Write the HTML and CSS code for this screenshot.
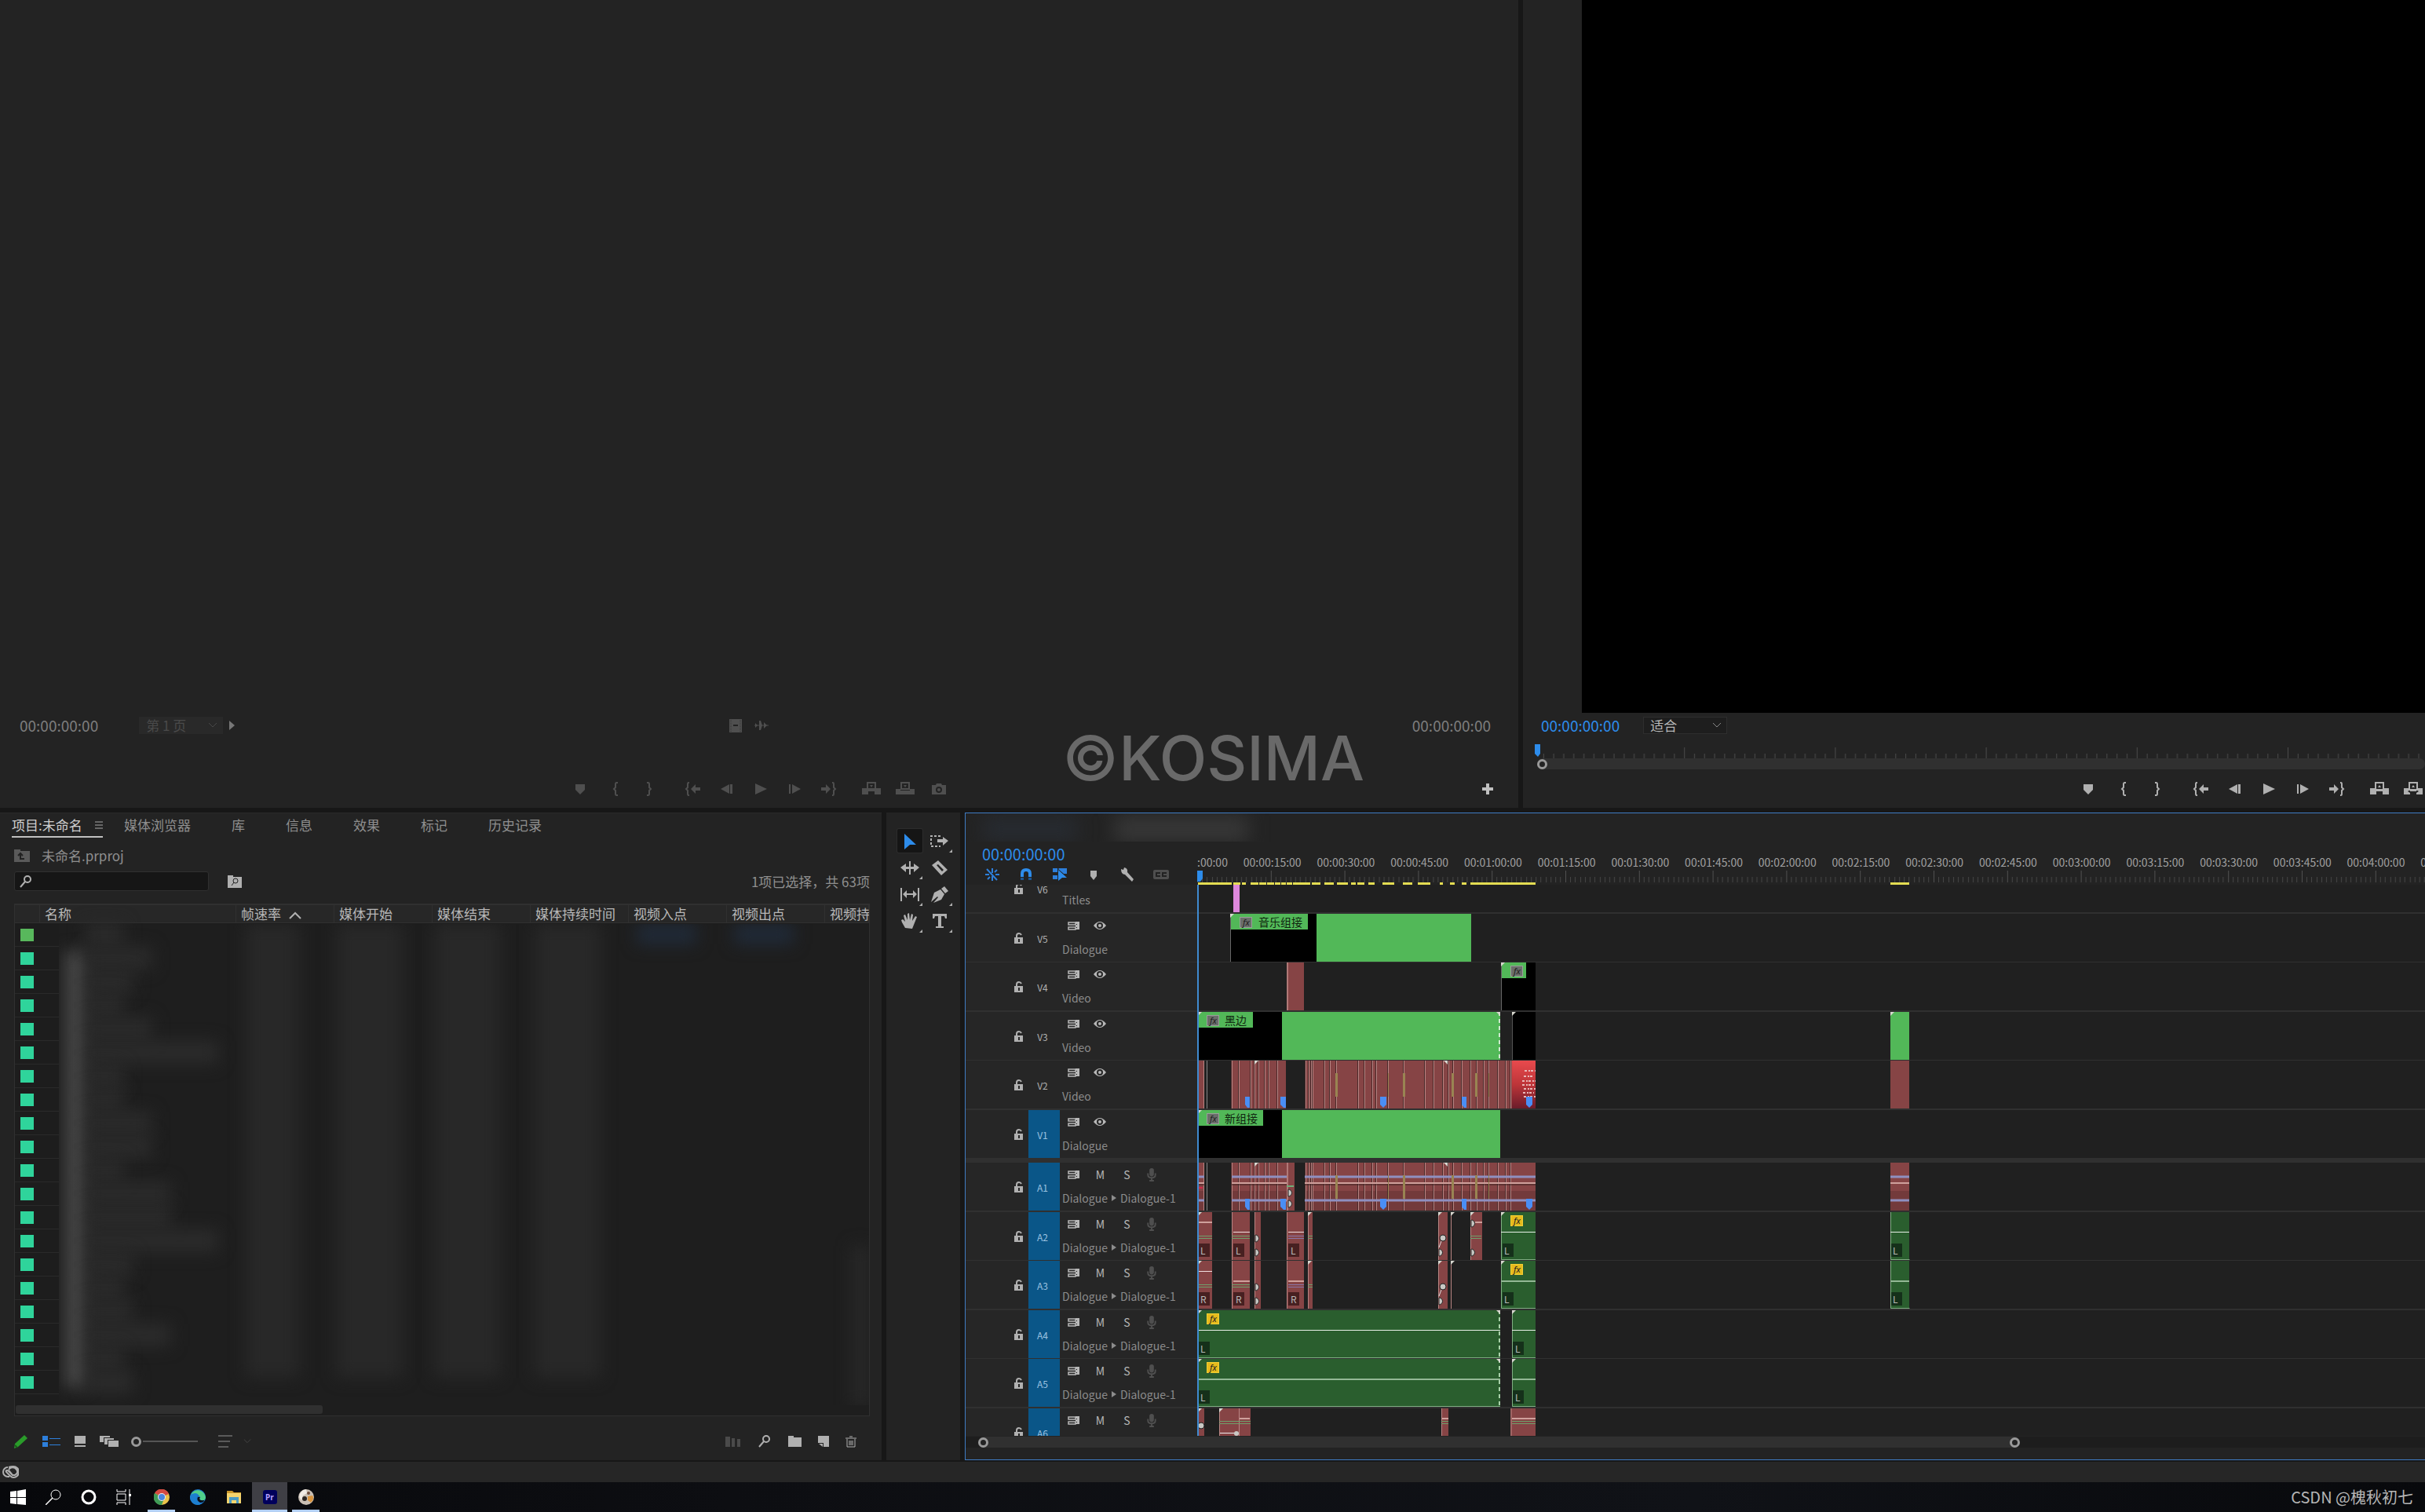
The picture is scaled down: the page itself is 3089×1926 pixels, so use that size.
FILE: index.html
```html
<!DOCTYPE html>
<html lang="zh-CN">
<head>
<meta charset="utf-8">
<title>未命名.prproj</title>
<link rel="stylesheet" href="styles.css">
</head>
<body>
<svg class="defs" width="0" height="0" aria-hidden="true">
  <defs>
    <symbol id="marker" viewBox="0 0 24 24"><path d="M6 6h12v7l-6 6-6-6z"/></symbol>
    <symbol id="in" viewBox="0 0 24 24"><path d="M14 4h-1.500q-1.500 0-1.500 2v4l-2 2 2 2v4q0 2 1.500 2H14" fill="none" stroke="currentColor" stroke-width="2"/></symbol>
    <symbol id="out" viewBox="0 0 24 24"><path d="M10 4h1.500q1.500 0 1.500 2v4l2 2-2 2v4q0 2-1.500 2H10" fill="none" stroke="currentColor" stroke-width="2"/></symbol>
    <symbol id="goin" viewBox="0 0 24 24"><path d="M7 4H6q-1 0-1 2v4l-2 2 2 2v4q0 2 1 2h1" fill="none" stroke="currentColor" stroke-width="2"/><path d="M9 12l6-6v4h6v4h-6v4z"/></symbol>
    <symbol id="goout" viewBox="0 0 24 24"><path d="M17 4h1q1 0 1 2v4l2 2-2 2v4q0 2-1 2h-1" fill="none" stroke="currentColor" stroke-width="2"/><path d="M15 12L9 6v4H3v4h6v4z"/></symbol>
    <symbol id="back" viewBox="0 0 24 24"><path d="M4 12l11-6v12zM16 6h3v12h-3z"/></symbol>
    <symbol id="fwd" viewBox="0 0 24 24"><path d="M20 12L9 6v12zM5 6h2v12H5z"/></symbol>
    <symbol id="play" viewBox="0 0 24 24"><path d="M5 5l15 7-15 7z"/></symbol>
    <symbol id="insert" viewBox="0 0 24 24"><path d="M7 4h10v8H7z" fill="none" stroke="currentColor" stroke-width="2"/><path d="M0 11h8v8H0zM16 11h8v8h-8zM8 13h8v2H8zM10 7h4l-2 3z"/></symbol>
    <symbol id="overwrite" viewBox="0 0 24 24"><path d="M7 4h10v8H7z" fill="none" stroke="currentColor" stroke-width="2"/><path d="M0 12h6v2h12v-2h6v7H0zM10 7h4l-2 3z"/></symbol>
    <symbol id="lift" viewBox="0 0 24 24"><path d="M7 4h10v9H7z" fill="none" stroke="currentColor" stroke-width="2"/><path d="M0 11h8v8H0zM16 11h8v8h-8zM8 13h8v2H8zM10 10h4l-2-3z"/></symbol>
    <symbol id="extract" viewBox="0 0 24 24"><path d="M7 4h10v9H7z" fill="none" stroke="currentColor" stroke-width="2"/><path d="M0 11h8v2l-3 2 3 2v2H0zM16 11h8v8h-8v-2l3-2-3-2zM8 13h8v2H8zM10 10h4l-2-3z"/></symbol>
    <symbol id="camera" viewBox="0 0 24 24"><path fill-rule="evenodd" d="M3 7h5l1-2h6l1 2h5v12H3zm9 2a4 4 0 100 8 4 4 0 000-8zm0 2a2 2 0 110 4 2 2 0 010-4z"/></symbol>
    <symbol id="lock" viewBox="0 0 12 14"><path fill-rule="evenodd" d="M0 6h11v8H0zM5 8v4h2V8z"/><path d="M3 7V4q0-3 3-3 2 0 3 2" fill="none" stroke="currentColor" stroke-width="2"/></symbol>
    <symbol id="sync" viewBox="0 0 16 12"><path d="M1 2h9v3H1zM1 8h9v3H1z" fill="none" stroke="currentColor" stroke-width="1.500"/><path d="M10 1h5v10h-5V9h2V8h-2V5h2V4h-2z"/></symbol>
    <symbol id="eye" viewBox="0 0 16 12"><path fill-rule="evenodd" d="M0 6q4-5 8-5t8 5q-4 5-8 5T0 6zm8-4a4 4 0 100 8 4 4 0 000-8z"/><circle cx="8" cy="6" r="2"/></symbol>
    <symbol id="mic" viewBox="0 0 12 18"><rect x="3" y="0" width="6" height="11" rx="3"/><path d="M1 7v2q0 4 5 4t5-4V7M6 13v4M3 17h6" fill="none" stroke="currentColor" stroke-width="2"/></symbol>
    <symbol id="find" viewBox="0 0 18 18"><circle cx="11" cy="6" r="4" fill="none" stroke="currentColor" stroke-width="2"/><path d="M8 9l-6 7" fill="none" stroke="currentColor" stroke-width="2"/></symbol>
    <symbol id="chev" viewBox="0 0 12 8"><path d="M1 1l5 5 5-5" fill="none" stroke="currentColor" stroke-width="1"/></symbol>
    <g id="fxg"><rect width="16" height="14" fill="#9a9d9a"/><rect x="1" y="1" width="14" height="12" fill="#6b6e6b"/><text class="fx" x="4" y="11">fx</text></g>
    <g id="fxy"><rect width="16" height="14" fill="#f2cf35"/><rect x="1" y="1" width="14" height="12" fill="#e6bb1c"/><text class="fx" x="4" y="11">fx</text></g>
    <linearGradient id="hot" x1="0" y1="0" x2="0" y2="1"><stop offset="0" stop-color="#e84a4d"/><stop offset=".5" stop-color="#bd3539"/><stop offset="1" stop-color="#6b1c2a"/></linearGradient>
    <path id="tri" d="M0 0h5L0 5z" fill="#d8d8d0"/>
    <path id="tag" d="M0 0h8v10l-4 4-4-4z" fill="#4a8ef5"/>
    <path id="cuts" d="M44.500 0v61M53.500 0v61M68.500 0v61M73.500 0v61M78.500 0v61M86.500 0v61M91.500 0v61M102.500 0v61M138.500 0v61M142.500 0v61M145.500 0v61M147.500 0v61M162.500 0v61M169.500 0v61M177.500 0v61M205.500 0v61M213.500 0v61M223.500 0v61M228.500 0v61M243.500 0v61M263.500 0v61M290.500 0v61M301.500 0v61M313.500 0v61M320.500 0v61M326.500 0v61M337.500 0v61M348.500 0v61M356.500 0v61M365.500 0v61M371.500 0v61M383.500 0v61M393.500 0v61M399.500 0v61"/>
    <g id="edits"><use href="#cuts" stroke="#b98583"/><use href="#cuts" x="-1" stroke="#4a2a2a"/><path d="M8.500 0v61" stroke="#b98583"/></g>
    <g id="fades" fill="#998452"><path d="M176 16h3v30h-3zM262 16h3v30h-3zM324 16h3v30h-3zM354 16h3v30h-3zM371 16h1v30h-1zM243 16h1v30h-1z"/></g>
    <g id="tags"><path d="M61 46h6v14h-3l-3-4z" fill="#4a8ef5"/><path d="M106 46h7v14h-3l-4-4z" fill="#4a8ef5"/><use href="#tag" x="233" y="46"/><path d="M337 46h6v14h-3l-3-4z" fill="#4a8ef5"/><use href="#tag" x="419" y="46"/></g>
  </defs>
</svg>

<main class="app">
  <section class="monitors">
    <section class="panel monitor" aria-label="源">
      <div class="screen"></div>
      <div class="mon-info dim">
        <span class="tc">00:00:00:00</span>
        <select class="pick page" aria-label="页" disabled><option>第 1 页</option></select>
        <svg class="nextpage" width="8" height="12" viewBox="0 0 8 12"><path d="M0 0l7 6-7 6z" fill="#777"/></svg>
        <span class="drag">
          <svg width="16" height="17" viewBox="0 0 16 17"><path d="M0 0h16v17H0z" fill="#4f4f4f"/><path d="M2 1v15M14 1v15" stroke="#333" stroke-dasharray="1 1"/><path d="M5 8h6" stroke="#222" stroke-width="2"/></svg>
          <svg width="18" height="14" viewBox="0 0 18 14"><path d="M0 7h18" stroke="#4f4f4f"/><path d="M1 4l3 3-3 3zM6 1h2l2 6-2 6H6zM12 3l4 4-4 4z" fill="#4f4f4f"/></svg>
        </span>
        <span class="tc end">00:00:00:00</span>
      </div>
      <div class="transport centre off">
        <span class="grp"><button title="添加标记"><svg><use href="#marker"/></svg></button></span>
        <span class="grp"><button title="标记入点"><svg><use href="#in"/></svg></button><button title="标记出点"><svg><use href="#out"/></svg></button></span>
        <span class="grp"><button title="转到入点"><svg><use href="#goin"/></svg></button><button title="后退一帧"><svg><use href="#back"/></svg></button><button title="播放"><svg><use href="#play"/></svg></button><button title="前进一帧"><svg><use href="#fwd"/></svg></button><button title="转到出点"><svg><use href="#goout"/></svg></button></span>
        <span class="grp"><button title="插入"><svg><use href="#insert"/></svg></button><button title="覆盖"><svg><use href="#overwrite"/></svg></button><button title="导出帧"><svg><use href="#camera"/></svg></button></span>
        <button class="plus" title="按钮编辑器"><svg viewBox="0 0 24 24"><path d="M10 5h4v5h5v4h-5v5h-4v-5H5v-4h5z"/></svg></button>
      </div>
      <div class="watermark">©KOSIMA</div>
    </section>

    <section class="panel monitor" aria-label="节目">
      <div class="screen black"></div>
      <div class="mon-info">
        <span class="tc blue">00:00:00:00</span>
        <select class="pick fit" aria-label="缩放级别"><option>适合</option></select>
      </div>
      <div class="mon-ruler">
        <svg class="ticks" width="100%" height="18"><defs><pattern id="mt" width="192.200" height="18" patternUnits="userSpaceOnUse" x="-1"><path d="M0.500 4v14" stroke="#4a4a4a"/><path d="M13.300 12v6M26.100 12v6M38.900 12v6M51.700 12v6M64.600 12v6M77.400 12v6M90.200 12v6M103 12v6M115.800 12v6M128.600 12v6M141.400 12v6M154.200 12v6M167.100 12v6M179.900 12v6" stroke="#4a4a4a"/></pattern></defs><rect x="8" width="100%" height="18" fill="url(#mt)"/><path d="M1 0h7v12l-3 4-4-4z" fill="#2d8ceb"/></svg>
        <div class="zoombar"><i class="knob"></i></div>
      </div>
      <div class="transport right">
        <span class="grp"><button title="添加标记"><svg><use href="#marker"/></svg></button></span>
        <span class="grp"><button title="标记入点"><svg><use href="#in"/></svg></button><button title="标记出点"><svg><use href="#out"/></svg></button></span>
        <span class="grp"><button title="转到入点"><svg><use href="#goin"/></svg></button><button title="后退一帧"><svg><use href="#back"/></svg></button><button title="播放"><svg><use href="#play"/></svg></button><button title="前进一帧"><svg><use href="#fwd"/></svg></button><button title="转到出点"><svg><use href="#goout"/></svg></button></span>
        <span class="grp"><button title="提升"><svg><use href="#lift"/></svg></button><button title="提取"><svg><use href="#extract"/></svg></button></span>
      </div>
    </section>
  </section>

  <section class="lower">
    <section class="panel project" aria-label="项目">
      <nav class="tabs">
        <button class="tab on">项目:未命名<svg width="10" height="10" viewBox="0 0 10 10"><path d="M0 1h10M0 5h10M0 9h10" stroke="#aaa"/></svg></button>
        <button class="tab">媒体浏览器</button><button class="tab">库</button><button class="tab">信息</button><button class="tab">效果</button><button class="tab">标记</button><button class="tab">历史记录</button>
      </nav>
      <div class="path"><svg width="20" height="17" viewBox="0 0 20 17"><path d="M0 1h8v2h12v14H0z" fill="#5a5a5a"/><path d="M8 14v-7M5 9l3-3 3 3M8 13h5" stroke="#222" stroke-width="2" fill="none"/></svg><span>未命名.prproj</span></div>
      <div class="searchrow">
        <label class="search"><svg width="18" height="18"><use href="#find"/></svg><input type="text" aria-label="搜索"></label>
        <button class="bin" title="从查询创建新的搜索素材箱"><svg width="18" height="16" viewBox="0 0 18 16"><path d="M0 0h7v2h11v14H0z" fill="#b0b0b0"/><circle cx="10" cy="7" r="3" fill="none" stroke="#222"/><path d="M8 9l-3 4" stroke="#222"/></svg></button>
        <span class="count">1项已选择，共 63项</span>
      </div>
      <div class="list">
        <table>
          <colgroup><col class="c0"><col class="c1"><col class="cn"><col class="cn"><col class="cn"><col class="cn"><col class="cn"><col class="cn"><col></colgroup>
          <thead><tr><th></th><th>名称</th><th>帧速率<svg width="16" height="10" viewBox="0 0 16 10"><path d="M1 9l7-7 7 7" fill="none" stroke="#b0b0b0" stroke-width="2"/></svg></th><th>媒体开始</th><th>媒体结束</th><th>媒体持续时间</th><th>视频入点</th><th>视频出点</th><th>视频持</th></tr></thead>
          <tbody>
            <tr class="seq"><td><i class="sw"></i></td><td><b class="smudge w1"></b></td></tr>
            <tr><td><i class="sw"></i></td><td><b class="smudge w3"></b></td></tr>
            <tr><td><i class="sw"></i></td><td><b class="smudge w2"></b></td></tr>
            <tr><td><i class="sw"></i></td><td><b class="smudge w1"></b></td></tr>
            <tr><td><i class="sw"></i></td><td><b class="smudge w3"></b></td></tr>
            <tr><td><i class="sw"></i></td><td><b class="smudge w5"></b></td></tr>
            <tr><td><i class="sw"></i></td><td><b class="smudge w1"></b></td></tr>
            <tr><td><i class="sw"></i></td><td><b class="smudge w1"></b></td></tr>
            <tr><td><i class="sw"></i></td><td><b class="smudge w3"></b></td></tr>
            <tr><td><i class="sw"></i></td><td><b class="smudge w3"></b></td></tr>
            <tr><td><i class="sw"></i></td><td><b class="smudge w1"></b></td></tr>
            <tr><td><i class="sw"></i></td><td><b class="smudge w4"></b></td></tr>
            <tr><td><i class="sw"></i></td><td><b class="smudge w4"></b></td></tr>
            <tr><td><i class="sw"></i></td><td><b class="smudge w5"></b></td></tr>
            <tr><td><i class="sw"></i></td><td><b class="smudge w2"></b></td></tr>
            <tr><td><i class="sw"></i></td><td><b class="smudge w1"></b></td></tr>
            <tr><td><i class="sw"></i></td><td><b class="smudge w2"></b></td></tr>
            <tr><td><i class="sw"></i></td><td><b class="smudge w4"></b></td></tr>
            <tr><td><i class="sw"></i></td><td><b class="smudge w1"></b></td></tr>
            <tr><td><i class="sw"></i></td><td><b class="smudge w2"></b></td></tr>
          </tbody>
        </table>
        <div class="veil"><i class="ico"></i><i class="col a"></i><i class="col b"></i><i class="col c"></i><i class="col d"></i><i class="tint e"></i><i class="tint f"></i><i class="vbar"></i></div>
        <div class="hscroll"><i></i></div>
      </div>
      <div class="foot">
        <svg width="18" height="18" viewBox="0 0 18 18"><path d="M13 1l4 4L5 16l-5 2 1-6z" fill="#2a9c2a"/><path d="M1 14l3 3" stroke="#1a5a1a" stroke-width="2"/></svg>
        <svg width="23" height="14" viewBox="0 0 23 14"><path d="M0 0h7v6H0zM0 8h7v6H0zM9 3h14v1H9zM9 11h14v1H9z" fill="#2d7fdb"/></svg>
        <svg width="14" height="14" viewBox="0 0 14 14"><path d="M0 0h14v10H0zM0 12h14v2H0z" fill="#b0b0b0"/></svg>
        <svg width="24" height="14" viewBox="0 0 24 14"><path d="M0 0h13v2H5v6H0zM6 3h12v2h-8v6H6zM11 6h13v8H11z" fill="#b0b0b0"/></svg>
        <input class="size" type="range" min="0" max="100" value="0" aria-label="缩放">
        <svg width="18" height="16" viewBox="0 0 18 16"><path d="M0 1h18M0 8h15M0 15h13" stroke="#5a5a5a" stroke-width="2"/></svg>
        <svg class="dimchev" width="10" height="8" viewBox="0 0 12 8"><use href="#chev"/></svg>
        <span class="push"></span>
        <svg width="20" height="13" viewBox="0 0 20 13"><path d="M0 0h6v13H0zM8 2h4v11H8zM15 3h4v10h-4z" fill="#4a4a4a"/></svg>
        <svg width="18" height="18" viewBox="0 0 18 18"><use href="#find"/></svg>
        <svg width="17" height="14" viewBox="0 0 17 14"><path d="M0 0h7v2h10v12H0z" fill="#b0b0b0"/></svg>
        <svg width="14" height="14" viewBox="0 0 14 14"><path d="M0 0h14v14H7V9H0z" fill="#b0b0b0"/><path d="M1 10h5v4z" fill="#b0b0b0"/></svg>
        <svg width="14" height="15" viewBox="0 0 14 15"><path d="M0 3h14M5 1h4M2 4v10h10V4M5 6v6M7 6v6M9 6v6" fill="none" stroke="#b0b0b0"/></svg>
      </div>
    </section>

    <aside class="panel tools" aria-label="工具">
      <button class="on" title="选择"><svg viewBox="0 0 24 24"><path d="M5 3l15 14H12l-7 6z" fill="#2d8ceb"/></svg></button>
      <button class="more" title="向前选择轨道"><svg viewBox="0 0 24 24"><path d="M13 6H1v13h12" fill="none" stroke="currentColor" stroke-width="2" stroke-dasharray="3 2"/><path d="M9 10h7V7l7 5-7 6v-4H9z"/></svg></button>
      <button class="more" title="波纹编辑"><svg viewBox="0 0 24 24"><path d="M11 4h2v17h-2zM0 12l7-5v4h10V7l7 5-7 6v-4H7v4z"/></svg></button>
      <button title="剃刀"><svg viewBox="0 0 24 24"><path fill-rule="evenodd" d="M2 9l8-6 12 12-8 7zM8 9l7 8 2-2-7-7z"/></svg></button>
      <button class="more" title="外滑"><svg viewBox="0 0 24 24"><path d="M0 4h2v17H0zM22 4h2v17h-2zM3 12l5-5v4h8V7l5 5-5 5v-4H8v4z"/></svg></button>
      <button class="more" title="钢笔"><svg viewBox="0 0 24 24"><path d="M14 5l4-3 5 6-4 3zM1 22l4-12 8-4 5 6-4 7-10 4 6-7-1-1z"/></svg></button>
      <button class="more" title="手形"><svg viewBox="0 0 24 24"><path d="M6 21l-4-7-1-3 2-1 3 3-2-8 2-1 3 7V3l2-1 1 9 2-8 2 1-1 8 4-6 2 1-4 10-2 5z"/></svg></button>
      <button class="more" title="文字"><svg viewBox="0 0 24 24"><path d="M3 3h18v6h-2l-1-3h-4v13h3v2H7v-2h3V6H6L5 9H3z"/></svg></button>
    </aside>

    <section class="panel timeline" aria-label="时间轴">
      <header class="tl-head">
        <div class="tl-left">
          <span class="tc big blue">00:00:00:00</span>
          <div class="tl-icons">
            <svg viewBox="0 0 20 20"><path d="M10 2v6M10 12v6M1 10h5M14 10h5M3 3l13 14M4 16l3-3M13 7l3-3" stroke="#2d7fdb" stroke-width="2"/></svg>
            <svg viewBox="0 0 20 20"><path d="M5 13V9q0-5 5-5t5 5v4" fill="none" stroke="#2d8ceb" stroke-width="4"/><path d="M3 14h4v3H3zM13 14h4v3h-4z" fill="#1c5590"/></svg>
            <svg viewBox="0 0 20 20"><path d="M1 2h6v5H1zM1 11h6v5H1zM9 2h10v7h-4L8 3z" fill="#2d7fdb"/><path d="M8 4l11 10h-6l-5 4z" fill="#2d8ceb"/></svg>
            <svg viewBox="0 0 20 20"><path d="M6 5h8v7l-4 5-4-5z" fill="#b0b0b0"/></svg>
            <svg viewBox="0 0 20 20"><path d="M2 3l3 1 1-3q5 1 4 6l8 9-2 3-9-9Q2 10 2 3z" fill="#b0b0b0"/></svg>
            <svg viewBox="0 0 20 20"><rect y="4" width="20" height="12" rx="2" fill="#4f4f4f"/><path d="M9 8H4v4h5M17 8h-5v4h5" fill="none" stroke="#222" stroke-width="2"/></svg>
          </div>
        </div>
        <div class="ruler">
          <div class="labels"><span>00:00:00:00</span><span>00:00:15:00</span><span>00:00:30:00</span><span>00:00:45:00</span><span>00:01:00:00</span><span>00:01:15:00</span><span>00:01:30:00</span><span>00:01:45:00</span><span>00:02:00:00</span><span>00:02:15:00</span><span>00:02:30:00</span><span>00:02:45:00</span><span>00:03:00:00</span><span>00:03:15:00</span><span>00:03:30:00</span><span>00:03:45:00</span><span>00:04:00:00</span><span>00:04:15:00</span></div>
          <svg width="100%" height="18"><defs><pattern id="tt" width="93.800" height="15" patternUnits="userSpaceOnUse"><path d="M.5 0v15" stroke="#505050"/><path d="M6.500 8v7M12.500 8v7M19.500 8v7M25.500 8v7M31.500 8v7M37.500 8v7M44.500 8v7M50.500 8v7M56.500 8v7M62.500 8v7M69.500 8v7M75.500 8v7M81.500 8v7M87.500 8v7" stroke="#454545"/></pattern></defs><rect width="100%" height="15" fill="url(#tt)"/><path d="M0 0h7v10l-3 4h-4z" fill="#2d8ceb"/><path fill="#e3dc52" d="M1 15h43v3H1zM46 15h9v3h-9zM57 15h5v3h-5zM68 15h10v3H68zM79 15h9v3h-9zM89 15h9v3h-9zM99 15h7v3h-7zM107 15h6v3h-6zM114 15h7v3h-7zM122 15h22v3h-22zM146 15h11v3h-11zM162 15h12v3h-12zM178 15h14v3h-14zM196 15h6v3h-6zM204 15h9v3h-9zM218 15h8v3h-8zM236 15h15v3h-15zM262 15h12v3h-12zM281 15h16v3h-16zM309 15h4v3h-4zM322 15h6v3h-6zM337 15h6v3h-6zM348 15h83v3h-83zM883 15h24v3h-24z"/></svg>
        </div>
        <div class="tl-blur"><i></i><i></i></div>
      </header>

      <div class="tracks">
        <div class="track first"><div class="th"><svg class="lock"><use href="#lock"/></svg><span class="id">V6</span><div class="ctl"><div class="keys"></div><span class="name">Titles</span></div></div>
          <svg class="lane"><path d="M46 0h8v35h-8z" fill="#de87dc"/></svg></div>
        <div class="track l2"><div class="th"><svg class="lock"><use href="#lock"/></svg><span class="id">V5</span><div class="ctl"><div class="keys"><svg class="sync"><use href="#sync"/></svg><svg class="eye"><use href="#eye"/></svg></div><span class="name">Dialogue</span></div></div>
          <svg class="lane"><path d="M42 0h110v61H42z" fill="#000"/><path d="M42 0h99v20H42zM152 0h197v61H152z" fill="#52b858"/><path d="M42.500 0v61" stroke="#666"/><use href="#tri" x="42"/><use href="#fxg" x="54" y="4"/><text class="cl" x="78" y="16">音乐组接</text></svg></div>
        <div class="track l1"><div class="th"><svg class="lock"><use href="#lock"/></svg><span class="id">V4</span><div class="ctl"><div class="keys"><svg class="sync"><use href="#sync"/></svg><svg class="eye"><use href="#eye"/></svg></div><span class="name">Video</span></div></div>
          <svg class="lane"><path d="M114 0h22v61h-22z" fill="#864445"/><path d="M115 0v61" stroke="#b07977" stroke-width="2"/><path d="M387 0h44v61h-44z" fill="#000"/><path d="M387 0h32v20h-32z" fill="#52b858"/><path d="M387.500 0v61" stroke="#666"/><use href="#tri" x="387"/><use href="#fxg" x="399" y="4"/></svg></div>
        <div class="track l2"><div class="th"><svg class="lock"><use href="#lock"/></svg><span class="id">V3</span><div class="ctl"><div class="keys"><svg class="sync"><use href="#sync"/></svg><svg class="eye"><use href="#eye"/></svg></div><span class="name">Video</span></div></div>
          <svg class="lane"><path d="M1 0h107v61H1zM401 0h30v61h-30z" fill="#000"/><path d="M1 0h70v20H1zM108 0h278v61H108zM883 0h24v61h-24z" fill="#52b858"/><path d="M385 0v61" stroke="#cfe8cf" stroke-width="2" stroke-dasharray="5 4"/><path d="M401.500 0v61" stroke="#555"/><use href="#tri" x="1"/><use href="#tri" x="401"/><path d="M381 0h5v5z" fill="#d8d8d0"/><use href="#tri" x="883"/><use href="#fxg" x="12" y="4"/><text class="cl" x="35" y="16">黑边</text></svg></div>
        <div class="track l1"><div class="th"><svg class="lock"><use href="#lock"/></svg><span class="id">V2</span><div class="ctl"><div class="keys"><svg class="sync"><use href="#sync"/></svg><svg class="eye"><use href="#eye"/></svg></div><span class="name">Video</span></div></div>
          <svg class="lane"><path d="M1 0h8v61H1zM44 0h69v61H44zM137 0h264v61H137zM883 0h24v61h-24z" fill="#864445"/><path d="M401 0h30v61h-30z" fill="url(#hot)"/><use href="#edits"/><path d="M12.500 0v61" stroke="#888"/><use href="#fades"/><path d="M417 13h14M416 20h13M414 26h17M414 31h16M416 36h15M415 41h14M416 46h15" stroke="#e8b8b8" stroke-width="2" stroke-dasharray="3 2 2 1"/><use href="#tri" x="73"/><path d="M314 0h5v5z" fill="#d8d8d0"/><use href="#tags"/></svg></div>
        <div class="track l2"><div class="th"><svg class="lock"><use href="#lock"/></svg><span class="id src">V1</span><div class="ctl"><div class="keys"><svg class="sync"><use href="#sync"/></svg><svg class="eye"><use href="#eye"/></svg></div><span class="name">Dialogue</span></div></div>
          <svg class="lane"><path d="M1 0h107v61H1z" fill="#000"/><path d="M1 0h83v20H1zM108 0h278v61H108z" fill="#52b858"/><use href="#tri" x="1"/><use href="#fxg" x="12" y="4"/><text class="cl" x="35" y="16">新组接</text></svg></div>
        <div class="split"></div>
        <div class="track"><div class="th"><svg class="lock"><use href="#lock"/></svg><span class="id src">A1</span><div class="ctl"><div class="keys"><svg class="sync"><use href="#sync"/></svg><button>M</button><button>S</button><svg class="mic"><use href="#mic"/></svg></div><span class="name">Dialogue <i></i> Dialogue-1</span></div></div>
          <svg class="lane"><path d="M1 0h8v61H1zM44 0h80v61H44zM137 0h294v61H137zM883 0h24v61h-24z" fill="#864445"/><path d="M1 36h8v25H1zM44 36h70v25H44zM137 36h294v25H137zM883 36h24v25h-24z" fill="#733a3b"/><use href="#edits"/><path d="M1 18h8M44 18h70M137 18h294M883 18h24M1 48h8M44 48h70M137 48h294M883 48h24" stroke="#8f8fc0" stroke-width="3"/><path d="M1 26h8M44 26h70M137 26h294M883 26h24" stroke="#cfa09c" stroke-width="2"/><path d="M1 28h8M44 28h70M137 28h294" stroke="#3a2020"/><path d="M1 32h6" stroke="#d02a4a" stroke-width="2"/><path d="M12.500 0v61" stroke="#888"/><path d="M115 0v61" stroke="#b07977" stroke-width="2"/><path d="M114 30h9" stroke="#6fae78" stroke-width="2"/><path d="M116 34a4 4 0 010 9zM116 48a4 4 0 010 9z" fill="#c8c8c4" stroke="#222"/><use href="#fades"/><use href="#tri" x="73"/><path d="M314 0h5v5z" fill="#d8d8d0"/><use href="#tags"/></svg></div>
        <div class="track l2"><div class="th"><svg class="lock"><use href="#lock"/></svg><span class="id src">A2</span><div class="ctl"><div class="keys"><svg class="sync"><use href="#sync"/></svg><button>M</button><button>S</button><svg class="mic"><use href="#mic"/></svg></div><span class="name">Dialogue <i></i> Dialogue-1</span></div></div>
          <svg class="lane"><path d="M1 0h18v61H1zM44 0h23v61H44zM73 0h8v61h-8zM114 0h22v61h-22zM141 0h6v61h-6zM307 0h12v61h-12zM348 0h15v61h-15z" fill="#864445"/><path d="M44.500 0v61M73.500 0v61M114.500 0v61M141.500 0v61M307.500 0v61M323.500 0v61M348.500 0v61" stroke="#b98583"/><path d="M1 13h18M354 13h9" stroke="#cfa09c" stroke-width="2"/><path d="M46 25.500h21M116 25.500h20" stroke="#f0e0e0"/><path d="M1 30.500h18M1 33.500h18M44 30.500h23M44 33.500h23M141 30.500h6M141 33.500h6M348 30.500h14M348 33.500h14" stroke="#6fa06c"/><path d="M116 30.500h20M116 33.500h20" stroke="#8a76a8"/><path d="M2 40h14v17H2zM46 40h14v17H46zM116 40h14v17h-14z" fill="#472021"/><path d="M74 29a4 4 0 010 9zM74 47a4 4 0 010 9zM349 10a4 4 0 010 9zM349 47a4 4 0 010 9zM308 47a4 4 0 010 9z" fill="#c8c8c4" stroke="#222"/><circle cx="313" cy="33" r="4" fill="#c8c8c4" stroke="#222"/><path d="M311 37l-3 8" stroke="#ddd"/><path d="M387 0h44v61h-44zM883 0h24v61h-24z" fill="#2a5e2e"/><path d="M387.500 0v60.500H431M883.500 0v60.500h24" fill="none" stroke="#7fae82"/><path d="M387 25.500h44M883 25.500h24" stroke="#e8f0e8"/><path d="M389 40h14v17h-14zM884 40h14v17h-14z" fill="#15301a"/><use href="#fxy" x="399" y="4"/><use href="#tri" x="1"/><use href="#tri" x="307"/><use href="#tri" x="323"/><use href="#tri" x="348"/><use href="#tri" x="387"/><use href="#tri" x="141"/><g class="ch"><text x="4" y="54">L</text><text x="49" y="54">L</text><text x="119" y="54">L</text><text x="391" y="54">L</text><text x="886" y="54">L</text></g></svg></div>
        <div class="track l1"><div class="th"><svg class="lock"><use href="#lock"/></svg><span class="id src">A3</span><div class="ctl"><div class="keys"><svg class="sync"><use href="#sync"/></svg><button>M</button><button>S</button><svg class="mic"><use href="#mic"/></svg></div><span class="name">Dialogue <i></i> Dialogue-1</span></div></div>
          <svg class="lane"><path d="M1 0h18v61H1zM44 0h23v61H44zM73 0h8v61h-8zM114 0h22v61h-22zM141 0h6v61h-6zM307 0h12v61h-12z" fill="#864445"/><path d="M44.500 0v61M73.500 0v61M114.500 0v61M141.500 0v61M307.500 0v61M323.500 0v61" stroke="#b98583"/><path d="M1 13.500h18" stroke="#f0e0e0"/><path d="M46 26h21M116 26h20" stroke="#cfa09c" stroke-width="2"/><path d="M1 30.500h18M1 33.500h18M44 30.500h23M44 33.500h23M141 30.500h6M141 33.500h6" stroke="#6fa06c"/><path d="M116 30.500h20M116 33.500h20" stroke="#8a76a8"/><path d="M2 40h14v17H2zM46 40h14v17H46zM116 40h14v17h-14z" fill="#472021"/><path d="M74 29a4 4 0 010 9zM74 47a4 4 0 010 9zM308 47a4 4 0 010 9z" fill="#c8c8c4" stroke="#222"/><circle cx="313" cy="33" r="4" fill="#c8c8c4" stroke="#222"/><path d="M311 37l-3 8" stroke="#ddd"/><path d="M387 0h44v61h-44zM883 0h24v61h-24z" fill="#2a5e2e"/><path d="M387.500 0v60.500H431M883.500 0v60.500h24" fill="none" stroke="#7fae82"/><path d="M387 26h44M883 26h24" stroke="#93b895" stroke-width="2"/><path d="M389 40h14v17h-14zM884 40h14v17h-14z" fill="#15301a"/><use href="#fxy" x="399" y="4"/><use href="#tri" x="1"/><use href="#tri" x="307"/><use href="#tri" x="323"/><use href="#tri" x="387"/><use href="#tri" x="141"/><g class="ch"><text x="4" y="54">R</text><text x="49" y="54">R</text><text x="119" y="54">R</text><text x="391" y="54">L</text><text x="886" y="54">L</text></g></svg></div>
        <div class="track l2"><div class="th"><svg class="lock"><use href="#lock"/></svg><span class="id src">A4</span><div class="ctl"><div class="keys"><svg class="sync"><use href="#sync"/></svg><button>M</button><button>S</button><svg class="mic"><use href="#mic"/></svg></div><span class="name">Dialogue <i></i> Dialogue-1</span></div></div>
          <svg class="lane"><path d="M1 0h385v61H1zM401 0h30v61h-30z" fill="#2a5e2e"/><path d="M1 60.500h385M401.500 0v60.500H431" fill="none" stroke="#7fae82"/><path d="M1 25.500h385M401 25.500h30" stroke="#e8f0e8"/><path d="M385 0v61" stroke="#a8d0a8" stroke-width="2" stroke-dasharray="5 4"/><path d="M2 40h14v17H2zM402 40h14v17h-14z" fill="#15301a"/><use href="#fxy" x="12" y="4"/><use href="#tri" x="1"/><use href="#tri" x="401"/><path d="M381 0h5v5z" fill="#d8d8d0"/><g class="ch"><text x="4" y="54">L</text><text x="405" y="54">L</text></g></svg></div>
        <div class="track l1"><div class="th"><svg class="lock"><use href="#lock"/></svg><span class="id src">A5</span><div class="ctl"><div class="keys"><svg class="sync"><use href="#sync"/></svg><button>M</button><button>S</button><svg class="mic"><use href="#mic"/></svg></div><span class="name">Dialogue <i></i> Dialogue-1</span></div></div>
          <svg class="lane"><path d="M1 0h385v61H1zM401 0h30v61h-30z" fill="#2a5e2e"/><path d="M1 60.500h385M401.500 0v60.500H431" fill="none" stroke="#7fae82"/><path d="M1 26h385M401 26h30" stroke="#93b895" stroke-width="2"/><path d="M385 0v61" stroke="#a8d0a8" stroke-width="2" stroke-dasharray="5 4"/><path d="M2 40h14v17H2zM402 40h14v17h-14z" fill="#15301a"/><use href="#fxy" x="12" y="4"/><use href="#tri" x="1"/><use href="#tri" x="401"/><path d="M381 0h5v5z" fill="#d8d8d0"/><g class="ch"><text x="4" y="54">L</text><text x="405" y="54">L</text></g></svg></div>
        <div class="track l2 last"><div class="th"><svg class="lock"><use href="#lock"/></svg><span class="id src">A6</span><div class="ctl"><div class="keys"><svg class="sync"><use href="#sync"/></svg><button>M</button><button>S</button><svg class="mic"><use href="#mic"/></svg></div></div></div>
          <svg class="lane"><path d="M1 0h8v61H1zM28 0h40v61H28zM311 0h9v61h-9zM399 0h32v61h-32z" fill="#864445"/><path d="M28.500 0v61M53.500 0v61M311.500 0v61M400 0v61" stroke="#b98583"/><path d="M54 13h13M312 13h8M401 13h30" stroke="#cfa09c" stroke-width="2"/><path d="M28 16.500h40M28 19.500h40M311 16.500h9M311 19.500h9M401 16.500h30M401 19.500h30" stroke="#6fa06c"/><path d="M29 31.500h19" stroke="#eee"/><circle cx="50" cy="32" r="3" fill="#c8c8c4"/><circle cx="5" cy="22" r="4" fill="#c8c8c4" stroke="#222"/><use href="#tri" x="1"/><use href="#tri" x="28"/></svg></div>
        <i class="playhead"></i>
      </div>
      <div class="tl-scroll"><div class="zoombar"><i class="knob"></i><i class="knob"></i></div></div>
    </section>
  </section>

  <div class="status"><svg width="21" height="16" viewBox="0 0 21 16"><path d="M9 14H7a6 6 0 010-12M8 2q3-1 6-1a7 7 0 010 14q-2 0-4-2L5 8q-1-2 1-2 1 0 2 1l5 5M8 5l2-2q5-2 8 2t-2 7h-3L8 6" fill="none" stroke="#b0b0b0" stroke-width="2"/></svg></div>
</main>

<footer class="taskbar">
  <button title="开始"><svg viewBox="0 0 20 20"><path d="M0 3l8-1v8H0zM9 2l11-2v10H9zM0 11h8v8l-8-1zM9 11h11v9L9 19z" fill="#fff"/></svg></button>
  <button title="搜索"><svg viewBox="0 0 20 20"><circle cx="13" cy="7" r="6" fill="none" stroke="#fff"/><path d="M9 11l-9 9" stroke="#fff" stroke-width="1.500"/></svg></button>
  <button title="Cortana"><svg viewBox="0 0 20 20"><circle cx="10" cy="10" r="8" fill="none" stroke="#fff" stroke-width="3"/></svg></button>
  <button title="任务视图"><svg viewBox="0 0 20 20"><path d="M1 0v3h11V0M1 6h11v8H1zM1 20v-3h11v3M17 0v20" fill="none" stroke="#fff"/><path d="M16 6h3v3h-3z" fill="#fff"/></svg></button>
  <span class="apps">
  <button class="run" title="Chrome"><svg viewBox="0 0 20 20"><circle cx="10" cy="10" r="10" fill="#e9c24a"/><path d="M10 10L1 5a10 10 0 0118 1z" fill="#d34a43"/><path d="M1 5a10 10 0 009 15l3-8z" fill="#3f9b56"/><circle cx="10" cy="10" r="5" fill="#eee"/><circle cx="10" cy="10" r="4" fill="#4a86e0"/></svg></button>
  <button title="Edge"><svg viewBox="0 0 20 20"><circle cx="10" cy="10" r="10" fill="#1b74c4"/><path d="M1 7a10 10 0 0119 4q-1 4-6 3-3-1-1-4-4-6-12-3z" fill="#4fcf8a"/><path d="M1 7q6-4 10 0-3 2-2 6 2 5 8 3-3 4-7 4A10 10 0 010 9z" fill="#1d7fd0"/><path d="M13 10q-3 5 5 4 0 3-5 3-5-2-3-7z" fill="#0c0f18"/></svg></button>
  <button title="文件资源管理器"><svg viewBox="0 0 20 20"><path d="M1 2h7l2 2h9v5H1z" fill="#c9962a"/><path d="M1 5h18v13H1z" fill="#f4d46e"/><path d="M4 18v-8h12v8h-3v-4H7v4z" fill="#4a9bc4"/></svg></button>
  <button class="run active" title="Premiere Pro"><svg viewBox="0 0 20 20"><rect x="1" y="1" width="18" height="18" rx="3" fill="#00005b"/><text x="4" y="14" class="pr">Pr</text></svg></button>
  <button class="run" title="应用"><svg viewBox="0 0 20 20"><circle cx="10" cy="10" r="10" fill="#c9bfb4"/><path d="M2 6q3-6 8-6l1 5-5 3-2 6q-4-4-2-8z" fill="#efeae4"/><circle cx="8" cy="12" r="3" fill="#2a2522"/><path d="M12 9l6-1q3 5-2 9l-4-3z" fill="#d9943e"/><circle cx="13" cy="5" r="2" fill="#6b4a3a"/></svg></button>
  </span>
  <span class="credit">CSDN @槐秋初七</span>
</footer>
</body>
</html>
```
FILE: styles.css
```css
* { box-sizing: border-box; }
body {
  margin: 0;
  min-height: 100vh;
  display: flex;
  flex-direction: column;
  overflow: hidden;
  background: #171717;
  color: #b0b0b0;
  font: 17px/20px "Noto Sans CJK SC", "Noto Sans", sans-serif;
}
button { padding: 0; border: 0; background: none; color: inherit; font: inherit; }
svg { display: block; fill: currentColor; flex: none; }
.defs { position: absolute; }
.app { flex: 1; display: flex; flex-direction: column; }
.panel { background: #232323; min-width: 0; }

/* monitors */
.monitors { flex: 1; display: grid; grid-template-columns: 1934fr 1149fr; gap: 6px; margin-bottom: 6px; }
.monitor { position: relative; display: flex; flex-direction: column; overflow: hidden; }
.screen { flex: 1; }
.screen.black { background: #000; margin-left: 75px; }
.mon-info { height: 34px; display: flex; align-items: center; padding: 0 35px 2px 25px; position: relative; }
.mon-info:not(.dim) { padding-left: 23px; }
.tc { font-size: 19px; color: #7d7d7d; }
.tc.blue { color: #2d8ceb; }
.tc.big { font-size: 20px; }
.tc.end { margin-left: auto; }
.pick {
  height: 22px; width: 107px; padding: 0 0 0 8px; border: 1px solid #2e2e2e; appearance: none;
  color: #b8b8b8; font: 17px/20px "Noto Sans CJK SC", sans-serif;
  background: #1e1e1e url("data:image/svg+xml,%3Csvg xmlns='http://www.w3.org/2000/svg' width='12' height='8'%3E%3Cpath d='M1 1l5 5 5-5' fill='none' stroke='%23888'/%3E%3C/svg%3E") no-repeat right 6px center;
}
.pick.fit { margin-left: 30px; }
.pick.page {
  margin-left: 52px; color: #4a4a4a; border-color: #292929; opacity: 1; background-color: #292929;
  background-image: url("data:image/svg+xml,%3Csvg xmlns='http://www.w3.org/2000/svg' width='12' height='8'%3E%3Cpath d='M1 1l5 5 5-5' fill='none' stroke='%23484848'/%3E%3C/svg%3E");
}
.nextpage { margin-left: 8px; }
.drag { position: absolute; left: 929px; display: flex; gap: 16px; align-items: center; }
.dim + .transport { margin-top: 37px; }
.transport { height: 50px; padding-top: 2px; display: flex; align-items: center; position: relative; }
.transport.centre { justify-content: center; }
.transport.right { justify-content: flex-end; margin-right: -6px; }
.transport svg { width: 24px; height: 24px; }
.transport button { width: 43px; height: 30px; display: grid; place-items: center; }
.transport.off { color: #4f4f4f; }
.grp { display: flex; }
.grp + .grp { margin-left: 12px; }
.grp:first-child + .grp { margin-left: 3px; }
.grp:first-child + .grp button + button { margin: 0 2px 0 -2px; }
.transport .plus { position: absolute; right: 18px; color: #c0c0c0; }
.watermark { position: absolute; left: 1353px; bottom: 15px; font: 500 79px/98px Inter, sans-serif; color: #696969; }
.mon-ruler { height: 37px; padding: 6px 0 0 14px; }
.ticks { display: block; }
.zoombar { height: 14px; background: #303030; border-radius: 7px; display: flex; align-items: center; justify-content: space-between; }
.knob { width: 13px; height: 13px; border: 3px solid #9a9a9a; border-radius: 50%; background: #232323; }
.mon-ruler .zoombar { margin-left: 4px; }

/* lower area */
.lower { display: grid; grid-template-columns: 1123fr 94px 1860fr; column-gap: 6px; height: 825px; }
.project { padding: 0 15px; border-top: 1px solid #2a2a2a; }
.tabs { display: flex; gap: 52px; height: 31px; color: #8f8f8f; }
.tab { padding: 0; height: 31px; white-space: nowrap; display: flex; align-items: center; border-bottom: 2px solid transparent; }
.tab.on { width: 116px; justify-content: space-between; color: #cfcfcf; border-color: #c0c0c0; margin-right: -25px; }
.path { display: flex; align-items: center; gap: 15px; height: 43px; padding: 2px 3px 0; color: #8f8f8f; }
.searchrow { display: flex; align-items: center; height: 25px; margin: 0 0 16px 3px; }
.search { width: 248px; height: 25px; display: flex; align-items: center; padding-left: 5px; background: #161616; border: 1px solid #303030; border-radius: 3px; }
.search input { flex: 1; min-width: 0; border: 0; background: none; outline: none; color: #ccc; font: inherit; height: 20px; }
.bin { margin-left: 24px; }
.count { margin-left: auto; color: #8f8f8f; }
.list { position: relative; margin-left: 3px; height: 653px; border: 1px solid #303030; border-top-width: 2px; background: #1d1d1d; overflow: hidden; }
table { width: 100%; table-layout: fixed; border-collapse: separate; border-spacing: 0; }
.c0 { width: 32px; }
.c1 { width: 250px; }
.cn { width: 125px; }
th { height: 23px; padding: 0 0 0 6px; text-align: left; font-weight: 400; line-height: 20px; background: #272727; border-right: 1px solid #303030; border-bottom: 1px solid #303030; white-space: nowrap; color: #b8b8b8; }
th svg { display: inline-block; margin-left: 10px; }
td { height: 30px; padding: 0 0 0 7px; border-bottom: 1px solid #2a2a2a; line-height: 0; }
.sw { display: block; width: 17px; height: 16px; background: #2fd49b; }
.seq .sw { background: #58b85c; }
.smudge { display: block; height: 29px; margin-left: 50px; background: #2b2b2b; filter: blur(10px); position: relative; z-index: 2; }
.w1 { width: 50px; } .w2 { width: 62px; } .w3 { width: 86px; } .w4 { width: 110px; } .w5 { width: 170px; }
.veil { position: absolute; left: 56px; top: 24px; right: 0; bottom: 12px; background: #1e1e1e; overflow: hidden; z-index: 1; }
.veil i { position: absolute; top: 0; bottom: 36px; filter: blur(10px); }
.veil .ico { left: 8px; width: 28px; top: 34px; bottom: 24px; background: #484848; }
.veil .col { width: 84px; background: #282828; }
.veil .a { left: 238px; width: 68px; }
.veil .b { left: 354px; } .veil .c { left: 478px; } .veil .d { left: 606px; }
.veil .tint { width: 76px; height: 26px; background: #202a38; bottom: auto; }
.veil .e { left: 736px; } .veil .f { left: 860px; }
.veil .vbar { right: 0; width: 22px; top: 410px; bottom: 0; background: #282828; }
.hscroll { position: absolute; left: 1px; right: 0; bottom: 1px; height: 12px; z-index: 3; background: #1e1e1e; }
.hscroll i { display: block; width: 36%; height: 11px; border-radius: 3px; background: #303030; }
.foot { display: flex; align-items: center; gap: 18px; height: 56px; padding: 8px 17px 0 3px; }
.foot .size { appearance: none; width: 85px; height: 14px; margin: 0 8px 0 -2px; background: linear-gradient(#555, #555) no-repeat 15px center / 70px 2px; }
.foot .size::-webkit-slider-thumb { appearance: none; width: 13px; height: 13px; border: 3px solid #9a9a9a; border-radius: 50%; background: #232323; }
.dimchev { color: #4a4a4a; margin-left: -4px; }
.push { flex: 1; }
.foot .push ~ svg { margin-left: 3px; }

.tools { display: grid; grid-template-columns: 32px 32px; grid-auto-rows: 30px; gap: 4px 6px; align-content: start; padding: 21px 0 0 14px; }
.tools button { display: grid; place-items: center; position: relative; border-radius: 2px; }
.tools svg { width: 24px; height: 24px; }
.tools .on { background: #151515; box-shadow: 0 0 0 1px #2c2c2c; }
.more::after { content: ""; position: absolute; right: 0; bottom: 0; border: 2px solid; border-color: transparent #b0b0b0 #b0b0b0 transparent; }

/* timeline */
.timeline { border: 1px solid #3f7cc4; border-right: 0; overflow: hidden; }
.tl-head { position: relative; display: grid; grid-template-columns: 295px 1fr; height: 91px; }
.tl-left { padding: 42px 0 0 21px; }
.tl-left .tc { display: block; }
.tl-icons { display: flex; gap: 23px; margin-top: 6px; padding-left: 3px; }
.tl-icons svg { width: 20px; height: 20px; }
.tl-blur { position: absolute; inset: 0 0 auto; height: 36px; overflow: hidden; }
.tl-blur i { position: absolute; top: 4px; height: 32px; left: 22px; width: 120px; background: #272b31; filter: blur(12px); }
.tl-blur i + i { left: 190px; width: 170px; background: #383838; }
.ruler { padding-top: 52px; overflow: hidden; }
.labels { display: flex; height: 21px; padding-left: 2px; font-size: 14px; color: #a0a0a0; }
.labels span { flex: 0 0 6%; display: flex; justify-content: center; margin-left: -3%; margin-right: 3%; white-space: nowrap; }
.tracks { position: relative; }
.track { display: grid; grid-template-columns: 295px 1fr; height: 61px; overflow: hidden; }
.l1 { border-top: 1px solid #303030; height: 62px; }
.l2 { border-top: 2px solid #303030; height: 63px; }
.first { height: 35px; align-content: end; align-items: end; }
.last { height: 37px; }
.th { display: grid; grid-template-columns: 80px 40px 1fr; height: 61px; align-items: center; background: #262626; }
.lock { width: 12px; height: 14px; margin-left: 62px; }
.id { height: 61px; display: grid; place-items: center; font-size: 12px; padding: 2px 4px 0 0; }
.id.src { background: #0a5688; color: #9cc3e0; }
.ctl { height: 61px; padding-left: 3px; font-size: 14px; color: #8c8c8c; }
.keys { display: flex; align-items: center; height: 30px; color: #b8b8b8; padding-left: 7px; }
.sync { width: 16px; height: 12px; margin-right: 17px; }
.eye { width: 16px; height: 12px; }
.mic { width: 12px; height: 17px; color: #4f4f4f; margin-left: 17px; }
.keys button { width: 17px; height: 20px; font-size: 14px; text-align: center; }
.keys button + button { margin-left: 17px; }
.name { display: flex; align-items: center; gap: 5px; padding-top: 5px; }
.name i { border: 4px solid transparent; border-left: 6px solid #8c8c8c; border-right: 0; }
.lane { width: 100%; height: 61px; background: #202020; }
.first .lane { height: 35px; }
.last .lane { height: 35px; }
.split { height: 6px; background: #303030; }
.playhead { position: absolute; left: 295px; top: 0; bottom: 0; width: 2px; background: #3f8ad0; }
.cl { font-size: 14px; fill: #10240f; }
.fx { font: italic 11px/12px "Noto Sans", sans-serif; fill: #202020; }
.ch { font-size: 12px; fill: #b8b8b8; }
.tl-scroll { height: 14px; margin: 1px 0 16px; padding-left: 16px; background: #1d1d1d; }
.tl-scroll .zoombar { width: 72%; }

.status { height: 26px; margin-top: 2px; background: #262626; display: flex; align-items: center; padding-left: 3px; }

.taskbar { height: 38px; display: flex; background: linear-gradient(90deg, #07080b, #0d0e12 30%, #101217 70%, #08090c); }
.taskbar button { width: 45px; height: 38px; display: grid; place-items: center; }
.taskbar svg { width: 20px; height: 20px; }
.apps { display: flex; gap: 1px; margin-left: 3px; }
.apps .run { background: linear-gradient(#b4d0f4, #b4d0f4) no-repeat center bottom / 35px 3px; }
.apps .active { background: linear-gradient(#b4d0f4, #b4d0f4) no-repeat center bottom / 45px 3px, #3f3f45; }
.pr { font: 700 10px/12px "Noto Sans", sans-serif; fill: #b5a0ff; }
.credit { margin-left: auto; margin-right: 15px; font-size: 20px; line-height: 38px; color: #b5b5b5; }
```
